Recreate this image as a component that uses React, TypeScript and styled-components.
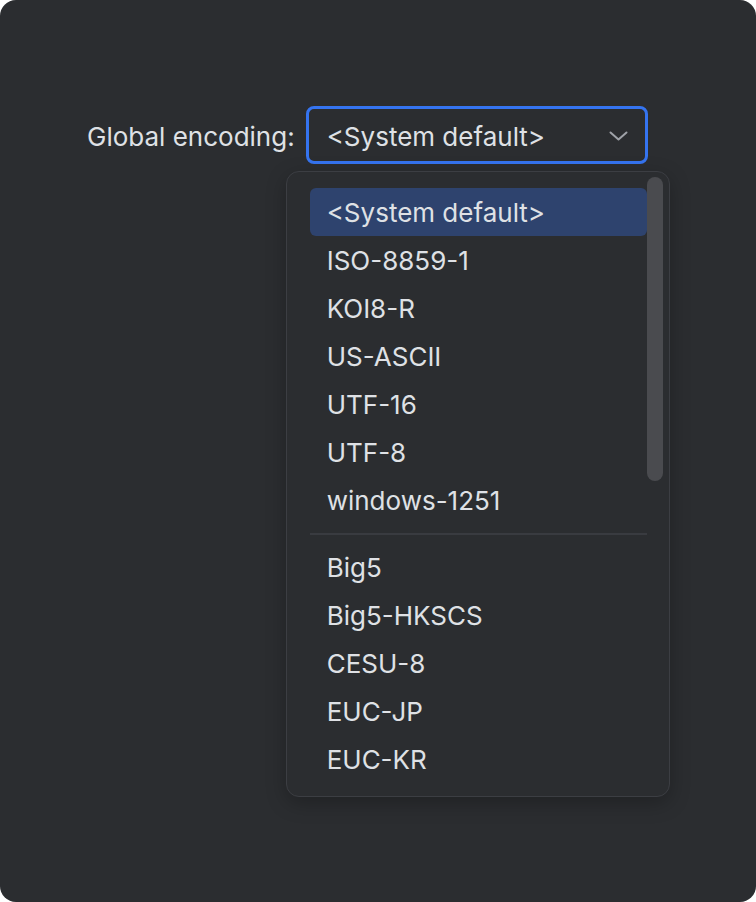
import React from "react";
import styled, { createGlobalStyle } from "styled-components";

const Global = createGlobalStyle`
  html, body { margin: 0; padding: 0; background: #ffffff; }
  body { font-family: Inter, "Noto Sans", sans-serif; }
`;

const Panel = styled.div`
  width: 756px;
  height: 902px;
  box-sizing: border-box;
  background: #2b2d30;
  border-radius: 16px;
  padding: 106px 0 0 87px;
  color: #dfe1e5;
  font-family: Inter, "Noto Sans", sans-serif;
  font-size: 26px;
`;

const Row = styled.div`
  display: flex;
  align-items: center;
  gap: 11px;
`;

const Label = styled.span`
  font-size: 26px;
  color: #dfe1e5;
  line-height: 1;
  padding-top: 3px;
`;

const Combo = styled.div`
  position: relative;
  width: 342px;
  height: 58px;
  box-sizing: border-box;
  border: 3px solid #3574f0;
  border-radius: 8px;
  display: flex;
  align-items: center;
  justify-content: space-between;
  padding: 2px 17px 0 18px;
`;

const ComboValue = styled.span`
  font-size: 26px;
  color: #dfe1e5;
`;

const Chevron = styled.svg`
  width: 19px;
  height: 10px;
  display: block;
`;

const Popup = styled.div`
  position: absolute;
  left: -23px;
  top: 62px;
  width: 384px;
  height: 626px;
  box-sizing: border-box;
  background: #2b2d30;
  border: 1px solid #3c3e43;
  border-radius: 13px;
  box-shadow: 0 6px 20px rgba(0, 0, 0, 0.25);
  display: flex;
  padding: 5px 6px 0 23px;
  overflow: hidden;
`;

const List = styled.div`
  flex: 1;
  display: flex;
  flex-direction: column;
  padding-top: 11px;
`;

const Item = styled.div<{ $selected?: boolean }>`
  height: 48px;
  display: flex;
  align-items: center;
  padding-left: 17px;
  border-radius: 6px;
  font-size: 26px;
  color: #dfe1e5;
  background: ${(p) => (p.$selected ? "#2e436e" : "transparent")};
`;

const Separator = styled.div`
  height: 19px;
  display: flex;
  align-items: center;
  &::after {
    content: "";
    display: block;
    width: 100%;
    height: 2px;
    background: #393b40;
  }
`;

const Track = styled.div`
  width: 16px;
  display: flex;
  flex-direction: column;
`;

const Thumb = styled.div`
  height: 304px;
  border-radius: 8px;
  background: #4a4b4f;
`;

const top = ["<System default>", "ISO-8859-1", "KOI8-R", "US-ASCII", "UTF-16", "UTF-8", "windows-1251"];
const rest = ["Big5", "Big5-HKSCS", "CESU-8", "EUC-JP", "EUC-KR"];

export default function App() {
  return (
    <>
      <Global />
      <Panel>
        <Row>
          <Label>Global encoding:</Label>
          <Combo>
            <ComboValue>&lt;System default&gt;</ComboValue>
            <Chevron viewBox="0 0 19 10" fill="none">
              <path d="M1.5 1.5 L9.5 8.5 L17.5 1.5" stroke="#9fa2a8" strokeWidth="2" strokeLinecap="round" strokeLinejoin="round" />
            </Chevron>
            <Popup>
              <List>
                {top.map((t, i) => (
                  <Item key={t} $selected={i === 0}>{t}</Item>
                ))}
                <Separator />
                {rest.map((t) => (
                  <Item key={t}>{t}</Item>
                ))}
              </List>
              <Track>
                <Thumb />
              </Track>
            </Popup>
          </Combo>
        </Row>
      </Panel>
    </>
  );
}
